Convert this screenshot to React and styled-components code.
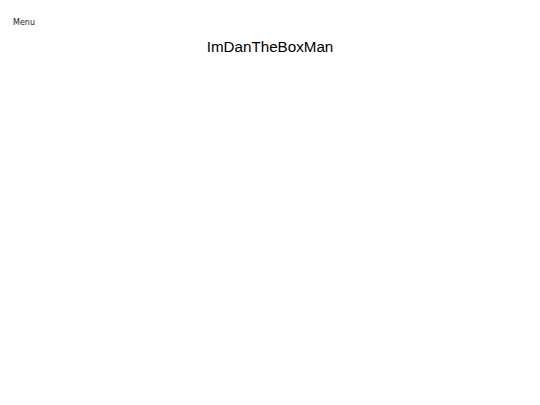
import React from "react";
import styled, { createGlobalStyle } from "styled-components";

const Global = createGlobalStyle`
  html, body { margin: 0; padding: 0; background: #ffffff; }
  body { font-family: "Liberation Sans", Arial, sans-serif; color: #000; }
`;

const Page = styled.div`
  display: flex;
  flex-direction: column;
  padding: 16px 13px;
`;

const MenuButton = styled.div`
  font-family: "DejaVu Sans", sans-serif;
  font-size: 8px;
  color: #222;
  line-height: 14px;
  align-self: flex-start;
`;

const Title = styled.h1`
  margin: 7px 0 0;
  font-family: "Liberation Sans", Arial, sans-serif;
  font-size: 15.2px;
  font-weight: 400;
  text-align: center;
  line-height: 20px;
`;

export default function App() {
  return (
    <>
      <Global />
      <Page>
        <MenuButton>Menu</MenuButton>
        <Title>ImDanTheBoxMan</Title>
      </Page>
    </>
  );
}
